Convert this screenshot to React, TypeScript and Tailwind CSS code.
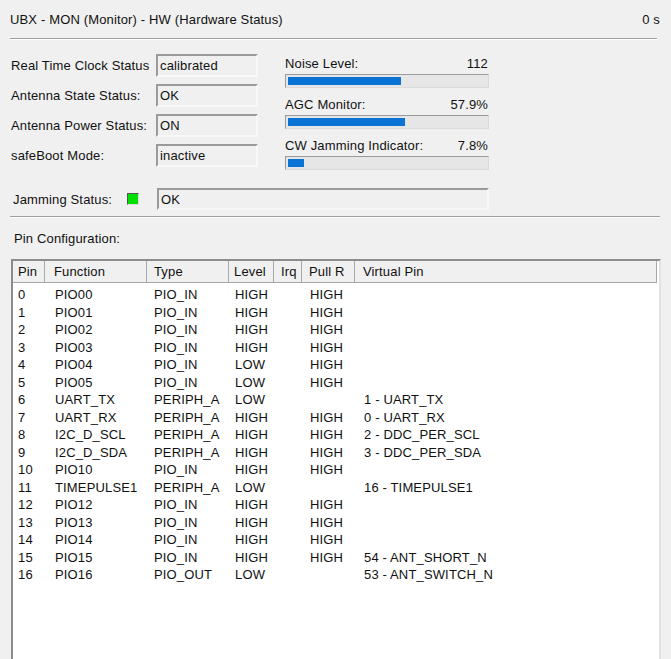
import React from 'react'

type PinRow = {
  pin: string
  fn: string
  type: string
  level: string
  irq: string
  pull: string
  virt: string
}

const rows: PinRow[] = [
  { pin: '0', fn: 'PIO00', type: 'PIO_IN', level: 'HIGH', irq: '', pull: 'HIGH', virt: '' },
  { pin: '1', fn: 'PIO01', type: 'PIO_IN', level: 'HIGH', irq: '', pull: 'HIGH', virt: '' },
  { pin: '2', fn: 'PIO02', type: 'PIO_IN', level: 'HIGH', irq: '', pull: 'HIGH', virt: '' },
  { pin: '3', fn: 'PIO03', type: 'PIO_IN', level: 'HIGH', irq: '', pull: 'HIGH', virt: '' },
  { pin: '4', fn: 'PIO04', type: 'PIO_IN', level: 'LOW', irq: '', pull: 'HIGH', virt: '' },
  { pin: '5', fn: 'PIO05', type: 'PIO_IN', level: 'LOW', irq: '', pull: 'HIGH', virt: '' },
  { pin: '6', fn: 'UART_TX', type: 'PERIPH_A', level: 'LOW', irq: '', pull: '', virt: '1 - UART_TX' },
  { pin: '7', fn: 'UART_RX', type: 'PERIPH_A', level: 'HIGH', irq: '', pull: 'HIGH', virt: '0 - UART_RX' },
  { pin: '8', fn: 'I2C_D_SCL', type: 'PERIPH_A', level: 'HIGH', irq: '', pull: 'HIGH', virt: '2 - DDC_PER_SCL' },
  { pin: '9', fn: 'I2C_D_SDA', type: 'PERIPH_A', level: 'HIGH', irq: '', pull: 'HIGH', virt: '3 - DDC_PER_SDA' },
  { pin: '10', fn: 'PIO10', type: 'PIO_IN', level: 'HIGH', irq: '', pull: 'HIGH', virt: '' },
  { pin: '11', fn: 'TIMEPULSE1', type: 'PERIPH_A', level: 'LOW', irq: '', pull: '', virt: '16 - TIMEPULSE1' },
  { pin: '12', fn: 'PIO12', type: 'PIO_IN', level: 'HIGH', irq: '', pull: 'HIGH', virt: '' },
  { pin: '13', fn: 'PIO13', type: 'PIO_IN', level: 'HIGH', irq: '', pull: 'HIGH', virt: '' },
  { pin: '14', fn: 'PIO14', type: 'PIO_IN', level: 'HIGH', irq: '', pull: 'HIGH', virt: '' },
  { pin: '15', fn: 'PIO15', type: 'PIO_IN', level: 'HIGH', irq: '', pull: 'HIGH', virt: '54 - ANT_SHORT_N' },
  { pin: '16', fn: 'PIO16', type: 'PIO_OUT', level: 'LOW', irq: '', pull: '', virt: '53 - ANT_SWITCH_N' }
]

const sunken =
  'border-2 border-solid border-t-[#9a9a9a] border-l-[#9a9a9a] border-r-[#f8f8f8] border-b-[#f8f8f8] bg-[#f0f0f0]'

const Field = ({ label, value }: { label: string; value: string }) => (
  <div className="flex h-[23px] items-center">
    <div className="w-[145px] shrink-0">{label}</div>
    <div className={`${sunken} flex h-[23px] w-[102px] items-center pl-[2px]`}>{value}</div>
  </div>
)

const Meter = ({ label, value, fill }: { label: string; value: string; fill: number }) => (
  <div className="flex flex-col">
    <div className="flex h-[15px] items-center justify-between pr-[1px]">
      <span>{label}</span>
      <span>{value}</span>
    </div>
    <div className="mt-[3px] h-[14px] w-[204px] border border-solid border-t-[#9a9a9a] border-l-[#9a9a9a] border-r-[#dadada] border-b-[#dadada] bg-[#e6e6e6] p-[2px]">
      <div className="h-full bg-[#0a74d6]" style={{ width: fill }} />
    </div>
  </div>
)

const Etched = ({ className }: { className: string }) => (
  <div className={`h-[2px] border-t border-b border-solid border-t-[#a0a0a0] border-b-white ${className}`} />
)

const cols = [
  { key: 'pin', title: 'Pin', w: 'w-[32px]', head: 'pl-[5px]' },
  { key: 'fn', title: 'Function', w: 'w-[102px]', head: 'pl-[9px]' },
  { key: 'type', title: 'Type', w: 'w-[82px]', head: 'pl-[7px]' },
  { key: 'level', title: 'Level', w: 'w-[45px]', head: 'pl-[5px]' },
  { key: 'irq', title: 'Irq', w: 'w-[28px]', head: 'pl-[7px]' },
  { key: 'pull', title: 'Pull R', w: 'w-[53px]', head: 'pl-[7px]' },
  { key: 'virt', title: 'Virtual Pin', w: 'w-[302px]', head: 'pl-[8px]' }
] as const

export default function App() {
  return (
    <div
      className="flex h-[659px] w-[671px] flex-col overflow-hidden bg-[#f0f0f0] text-[13px] leading-none tracking-[0.15px] text-[#111]"
      style={{ fontFamily: '"Liberation Sans", Arial, sans-serif' }}
    >
      <div className="flex h-[38px] items-center justify-between pl-[10px] pr-[11px]">
        <span>UBX - MON (Monitor) - HW (Hardware Status)</span>
        <span>0 s</span>
      </div>
      <Etched className="ml-[10px] w-[647px]" />

      <div className="mt-[14px] flex items-start pl-[11px]">
        <div className="flex w-[274px] flex-col gap-[7px]">
          <Field label="Real Time Clock Status" value="calibrated" />
          <Field label="Antenna State Status:" value="OK" />
          <Field label="Antenna Power Status:" value="ON" />
          <Field label="safeBoot Mode:" value="inactive" />
        </div>
        <div className="mt-[2px] flex flex-col gap-[9px]">
          <Meter label="Noise Level:" value="112" fill={113} />
          <Meter label="AGC Monitor:" value="57.9%" fill={117} />
          <Meter label="CW Jamming Indicator:" value="7.8%" fill={16} />
        </div>
      </div>

      <div className="mt-[18px] flex h-[22px] items-center pl-[13px]">
        <span className="w-[114px]">Jamming Status:</span>
        <div className="h-[12px] w-[12px] border border-solid border-t-[#555] border-l-[#555] border-r-[#ddd] border-b-[#ddd] bg-[#00e000]" />
        <div className={`${sunken} ml-[18px] flex h-[22px] w-[332px] items-center pl-[2px]`}>OK</div>
      </div>

      <Etched className="ml-[10px] mt-[6px] w-[650px]" />

      <div className="flex h-[41px] items-center pl-[14px]">Pin Configuration:</div>

      <div className="ml-[11px] flex w-[650px] flex-1 flex-col border-t-2 border-l-2 border-r-2 border-solid border-t-[#8c8c8c] border-l-[#8c8c8c] border-r-[#e2e2e2] bg-white">
        <div className="flex h-[22px] w-[644px] border-b border-r border-solid border-[#a8a8a8] bg-[#f0f0f0]">
          {cols.map((c, i) => (
            <div
              key={c.key}
              className={`${c.w} ${c.head} flex shrink-0 items-center ${i < cols.length - 1 ? 'border-r border-solid border-[#a8a8a8]' : ''}`}
            >
              {c.title}
            </div>
          ))}
        </div>
        <div className="flex flex-col pt-[3px]">
          {rows.map((r) => (
            <div key={r.pin} className="flex h-[17.5px] items-center">
              <div className="w-[32px] shrink-0 pl-[5px]">{r.pin}</div>
              <div className="w-[102px] shrink-0 pl-[10px]">{r.fn}</div>
              <div className="w-[82px] shrink-0 pl-[7px]">{r.type}</div>
              <div className="w-[45px] shrink-0 pl-[6px]">{r.level}</div>
              <div className="w-[28px] shrink-0 pl-[7px]">{r.irq}</div>
              <div className="w-[53px] shrink-0 pl-[8px]">{r.pull}</div>
              <div className="w-[302px] shrink-0 pl-[9px]">{r.virt}</div>
            </div>
          ))}
        </div>
      </div>
    </div>
  )
}
